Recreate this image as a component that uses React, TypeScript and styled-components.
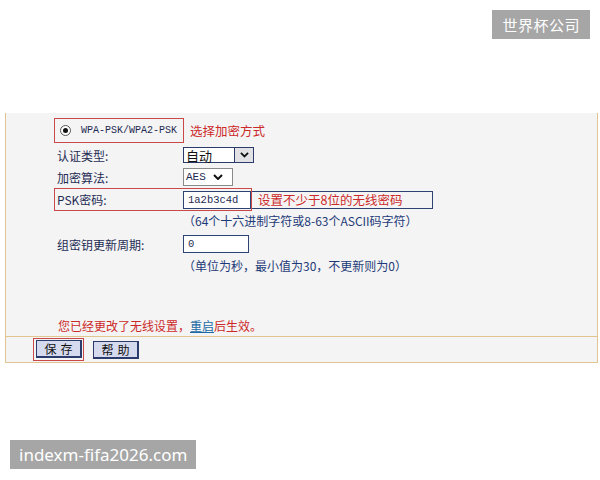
import styled, { createGlobalStyle } from 'styled-components';

const GlobalStyle = createGlobalStyle`
  html, body {
    margin: 0;
    padding: 0;
    background: #ffffff;
  }
  body {
    font-family: "Noto Sans CJK SC", "Noto Sans", sans-serif;
  }
`;

const Page = styled.div`
  position: relative;
  width: 600px;
  height: 480px;
  box-sizing: border-box;
  padding: 113px 2px 0 5px;
  background: #ffffff;
`;

const Watermark = styled.div<{ $corner: 'top' | 'bottom' }>`
  position: absolute;
  ${(p) => (p.$corner === 'top' ? 'top: 10px; right: 10px;' : 'top: 440px; left: 10px;')}
  height: 29px;
  display: flex;
  align-items: center;
  padding: 0 ${(p) => (p.$corner === 'top' ? '10px' : '9px')};
  background: #a6a6a6;
  color: #ffffff;
  font-family: ${(p) => (p.$corner === 'top' ? '"Noto Sans CJK SC", sans-serif' : '"Noto Sans", "DejaVu Sans", sans-serif')};
  font-size: ${(p) => (p.$corner === 'top' ? '15px' : '17px')};
  letter-spacing: ${(p) => (p.$corner === 'top' ? '0.5px' : '0')};
`;

const Panel = styled.div`
  width: 593px;
  box-sizing: border-box;
  background: #f4f4f4;
  border: 1px solid #e2c48e;
  border-top: none;
`;

const Form = styled.div`
  display: flex;
  flex-direction: column;
  padding: 5px 0 2px 48px;
  border-bottom: 1px solid #e2c48e;
`;

const Row = styled.div<{ $h: number; $mt?: number }>`
  display: flex;
  align-items: center;
  height: ${(p) => p.$h}px;
  margin-top: ${(p) => p.$mt ?? 0}px;
`;

const RadioBox = styled.div`
  display: flex;
  align-items: center;
  width: 130px;
  height: 25px;
  box-sizing: border-box;
  border: 1px solid #c94848;
  padding-left: 5px;
  gap: 10px;
`;

const Radio = styled.span`
  width: 11px;
  height: 11px;
  box-sizing: border-box;
  border-radius: 50%;
  border: 1px solid #555;
  background: #fff;
  display: flex;
  align-items: center;
  justify-content: center;
  &::after {
    content: '';
    width: 5px;
    height: 5px;
    border-radius: 50%;
    background: #111;
  }
`;

const MonoText = styled.span<{ $size?: number }>`
  font-family: "Liberation Mono", "DejaVu Sans Mono", monospace;
  font-size: ${(p) => p.$size ?? 10}px;
  color: #1c2a52;
`;

const RedNote = styled.span<{ $ml?: number }>`
  margin-left: ${(p) => p.$ml ?? 0}px;
  color: #cc2a2a;
  font-size: 12.5px;
  white-space: nowrap;
`;

const Label = styled.div<{ $w?: number; $pl?: number }>`
  width: ${(p) => p.$w ?? 129}px;
  padding-left: ${(p) => p.$pl ?? 3}px;
  box-sizing: border-box;
  font-size: 12px;
  color: #1f2c55;
  white-space: nowrap;
`;

const Select = styled.div<{ $w: number; $h: number; $boxed?: boolean }>`
  display: flex;
  align-items: stretch;
  width: ${(p) => p.$w}px;
  height: ${(p) => p.$h}px;
  box-sizing: border-box;
  border: 1px solid ${(p) => (p.$boxed ? '#2b3b6c' : '#8a8a8a')};
  background: #ffffff;
`;

const SelectValue = styled.div`
  flex: 1;
  display: flex;
  align-items: center;
  padding-left: 2px;
  font-size: 13px;
  color: #111;
`;

const ArrowCell = styled.div<{ $boxed?: boolean }>`
  width: ${(p) => (p.$boxed ? '18px' : '20px')};
  display: flex;
  align-items: center;
  justify-content: center;
  background: ${(p) => (p.$boxed ? '#e2e2e6' : 'transparent')};
  border-left: ${(p) => (p.$boxed ? '1px solid #2b3b6c' : 'none')};
  margin-right: ${(p) => (p.$boxed ? '0' : '4px')};
`;

const TextInput = styled.div<{ $w: number }>`
  display: flex;
  align-items: center;
  width: ${(p) => p.$w}px;
  height: 18px;
  box-sizing: border-box;
  border: 1px solid #2f4274;
  background: #ffffff;
  padding-left: 4px;
`;

const PskBox = styled.div`
  display: flex;
  align-items: center;
  height: 23px;
  box-sizing: border-box;
  border: 1px solid #c94848;
`;

const HintBox = styled.div`
  display: flex;
  align-items: center;
  width: 181px;
  height: 18px;
  box-sizing: border-box;
  border: 1px solid #2f4274;
  border-left: none;
  padding-left: 6px;
`;

const Hint = styled.div`
  margin-left: 129px;
  font-size: 12px;
  color: #1e3a78;
  white-space: nowrap;
`;

const Spacer = styled.div<{ $h: number }>`
  height: ${(p) => p.$h}px;
`;

const Notice = styled.div`
  padding-left: 4px;
  font-size: 12px;
  color: #cc2a2a;
  white-space: nowrap;
`;

const Link = styled.span`
  color: #1b6aa5;
  text-decoration: underline;
`;

const Footer = styled.div`
  display: flex;
  align-items: flex-start;
  height: 25px;
  padding: 1px 0 0 27px;
  box-sizing: border-box;
  gap: 9px;
`;

const SaveFrame = styled.div`
  display: flex;
  padding: 1px 1px 2px 2px;
  border: 1px solid #c94848;
`;

const Button = styled.button<{ $mt?: number }>`
  display: flex;
  align-items: center;
  justify-content: center;
  width: 46px;
  height: 18px;
  margin-top: ${(p) => p.$mt ?? 0}px;
  padding: 0;
  box-sizing: border-box;
  border: 1px solid #2b3b6c;
  border-right-width: 2px;
  border-bottom-width: 2px;
  background: #d6daee;
  font-family: "Noto Sans CJK SC", sans-serif;
  font-size: 12px;
  line-height: 14px;
  color: #111;
  letter-spacing: 4px;
  text-indent: 4px;
`;

const Chevron = ({ w = 9 }: { w?: number }) => (
  <svg width={w} height={w * 0.65} viewBox="0 0 10 6.5">
    <path d="M1 1 L5 5 L9 1" fill="none" stroke="#111" strokeWidth="2" />
  </svg>
);

export default function App() {
  return (
    <>
      <GlobalStyle />
      <Page>
        <Watermark $corner="top">世界杯公司</Watermark>
        <Panel>
          <Form>
            <Row $h={25}>
              <RadioBox>
                <Radio />
                <MonoText>WPA-PSK/WPA2-PSK</MonoText>
              </RadioBox>
              <RedNote $ml={6}>选择加密方式</RedNote>
            </Row>
            <Row $h={22} $mt={1}>
              <Label>认证类型:</Label>
              <Select $w={71} $h={16} $boxed>
                <SelectValue>自动</SelectValue>
                <ArrowCell $boxed>
                  <Chevron w={9} />
                </ArrowCell>
              </Select>
            </Row>
            <Row $h={22}>
              <Label>加密算法:</Label>
              <Select $w={50} $h={18}>
                <SelectValue>
                  <MonoText $size={11}>AES</MonoText>
                </SelectValue>
                <ArrowCell>
                  <Chevron w={10} />
                </ArrowCell>
              </Select>
            </Row>
            <Row $h={23}>
              <PskBox>
                <Label $w={128} $pl={2}>PSK密码:</Label>
                <TextInput $w={68}>
                  <MonoText $size={10.5}>1a2b3c4d</MonoText>
                </TextInput>
              </PskBox>
              <HintBox>
                <RedNote>设置不少于8位的无线密码</RedNote>
              </HintBox>
            </Row>
            <Row $h={18}>
              <Hint>（64个十六进制字符或8-63个ASCII码字符）</Hint>
            </Row>
            <Row $h={22} $mt={4}>
              <Label>组密钥更新周期:</Label>
              <TextInput $w={66}>
                <MonoText $size={10.5}>0</MonoText>
              </TextInput>
            </Row>
            <Row $h={18} $mt={1}>
              <Hint>（单位为秒，最小值为30，不更新则为0）</Hint>
            </Row>
            <Spacer $h={42} />
            <Row $h={18}>
              <Notice>
                您已经更改了无线设置，<Link>重启</Link>后生效。
              </Notice>
            </Row>
          </Form>
          <Footer>
            <SaveFrame>
              <Button>保存</Button>
            </SaveFrame>
            <Button $mt={3}>帮助</Button>
          </Footer>
        </Panel>
        <Watermark $corner="bottom">indexm-fifa2026.com</Watermark>
      </Page>
    </>
  );
}
